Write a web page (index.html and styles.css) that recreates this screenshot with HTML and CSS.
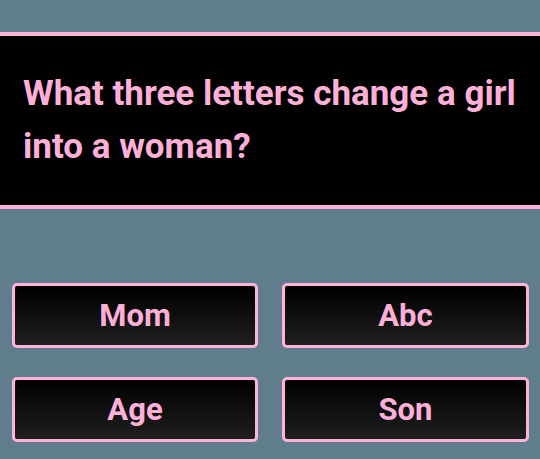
FILE: index.html
```html
<!DOCTYPE html>
<html>
<head>
<meta charset="utf-8">
<link rel="stylesheet" href="styles.css">
</head>
<body>
<div class="screen">
  <div class="question">What three letters change a girl into a woman?</div>
  <div class="answers">
    <div class="answer">Mom</div>
    <div class="answer">Abc</div>
    <div class="answer">Age</div>
    <div class="answer">Son</div>
  </div>
</div>
</body>
</html>
```
FILE: styles.css
```css
html, body {
  margin: 0;
  padding: 0;
  background: #5f7d8c;
}
.screen {
  width: 540px;
  height: 459px;
  overflow: hidden;
  padding-top: 32px;
  box-sizing: border-box;
  font-family: Roboto, "Liberation Sans", sans-serif;
  font-weight: 700;
  color: #ffb0d8;
}
.question {
  background: #000;
  border-top: 4px solid #ffb3d9;
  border-bottom: 4px solid #ffb3d9;
  padding: 31px 8px 32px 23px;
  font-size: 35px;
  line-height: 53px;
  height: 106px;
}
.answers {
  display: grid;
  grid-template-columns: 246px 247px;
  column-gap: 24px;
  row-gap: 29px;
  padding: 74px 11px 0 12px;
}
.answer {
  height: 65px;
  box-sizing: border-box;
  border: 3px solid #ffb3d9;
  border-radius: 5px;
  background: linear-gradient(to bottom, #000 0%, #1f1f1f 100%);
  display: flex;
  align-items: center;
  justify-content: center;
  font-size: 31px;
}
```
